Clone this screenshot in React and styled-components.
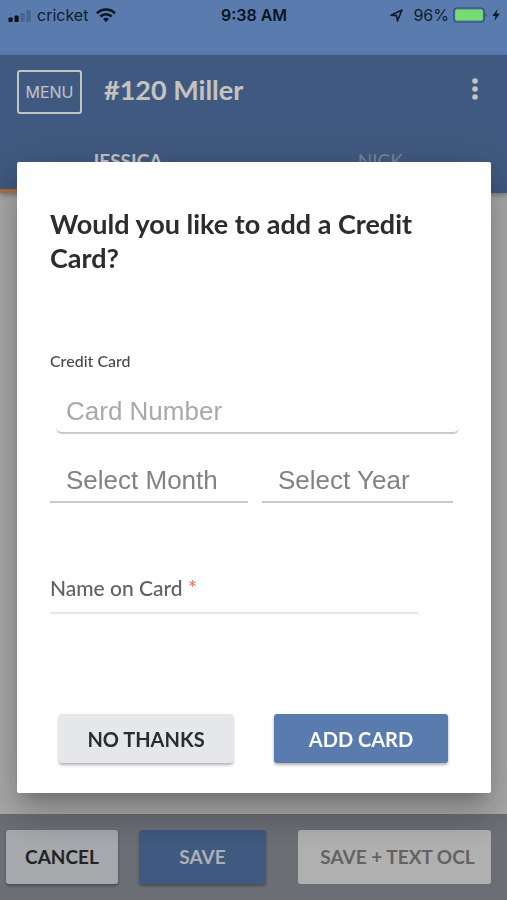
import React, { useState } from 'react';
import styled, { createGlobalStyle, ThemeProvider } from 'styled-components';

const theme = {
  primary: '#597bae',
  primaryDim: '#5170a0',
  text: '#2b2c2e',
  muted: '#606164',
  line: '#c9c9c9',
};

const GlobalStyle = createGlobalStyle`
  * {
    box-sizing: border-box;
  }

  body {
    margin: 0;
    font-family: Lato, "Open Sans", sans-serif;
    color: ${theme.text};
  }

  button, input, select {
    font-family: inherit;
    margin: 0;
  }
`;

const Page = styled.div`
  display: flex;
  flex-direction: column;
  min-height: 100vh;
  background-color: #d4d4d4;
`;

const StatusBar = styled.div`
  display: grid;
  grid-template-columns: 1fr auto 1fr;
  align-items: start;
  height: 55px;
  padding: 5px 7px 0 8px;
  background-color: ${({ theme }) => theme.primary};
  color: #101c2c;
  font-family: Inter, sans-serif;
  font-size: 16px;
  line-height: 20px;
`;

const StatusGroup = styled.div`
  display: flex;
  align-items: center;
  justify-content: ${({ $end }) => ($end ? 'flex-end' : 'flex-start')};
  gap: ${({ $end }) => ($end ? '4px' : '6px')};
  height: 20px;
`;

const Clock = styled.div`
  font-weight: 600;
  color: #0b131f;
`;

const Header = styled.header`
  background-color: ${({ theme }) => theme.primaryDim};
  color: #f4f4f0;
  box-shadow: 0 2px 5px rgba(0, 0, 0, 0.3);
`;

const Toolbar = styled.div`
  display: flex;
  align-items: center;
  height: 74px;
  padding: 0 24px 0 17px;
`;

const MenuButton = styled.button`
  width: 65px;
  height: 44px;
  padding: 0;
  border: 2px solid #f4f4f0;
  border-radius: 3px;
  background: transparent;
  color: #eef4fa;
  font-family: Inter, sans-serif;
  font-size: 16px;
  cursor: pointer;
`;

const Heading = styled.h1`
  flex: 1;
  margin: 0 0 4px 22px;
  font-size: 27px;
  line-height: 34px;
  font-weight: 700;
`;

const MoreButton = styled.button`
  display: flex;
  margin-bottom: 6px;
  padding: 0 5px;
  border: 0;
  background: transparent;
  color: #f4f4f0;
  cursor: pointer;
`;

const Tabs = styled.nav`
  display: flex;
  height: 64px;
`;

const Tab = styled.a`
  flex: 1;
  padding-top: 20px;
  border-bottom: 4px solid ${({ $active }) => ($active ? '#d98a55' : 'transparent')};
  color: ${({ $active }) => ($active ? '#f0f2f4' : '#8fa5c3')};
  font-size: 19px;
  line-height: 24px;
  font-weight: ${({ $active }) => ($active ? 700 : 400)};
  text-align: center;
  text-decoration: none;
`;

const Content = styled.main`
  flex: 1;
`;

const Footer = styled.footer`
  display: flex;
  align-items: flex-start;
  padding: 16px 16px 16px 6px;
  background-color: #888a94;
`;

const Button = styled.button`
  height: 54px;
  padding: 0;
  border: 0;
  border-radius: 3px;
  background-color: ${({ $color }) => $color};
  color: ${({ $text }) => $text || '#2b2c2e'};
  font-size: 19px;
  line-height: 24px;
  font-weight: 700;
  cursor: pointer;
  box-shadow: 0 2px 3px rgba(0, 0, 0, 0.3);
`;

const CancelButton = styled(Button)`
  flex: 112 1 0;
`;

const SaveButton = styled(Button)`
  flex: 127 1 0;
  margin-left: 21px;
`;

const SaveTextButton = styled(Button)`
  flex: 187 1 0;
  margin-left: 32px;
  padding-left: 6px;
  white-space: nowrap;
  box-shadow: none;
`;

const Overlay = styled.div`
  position: fixed;
  inset: 55px 0 0;
  display: flex;
  align-items: center;
  justify-content: center;
  padding: 0 16px 0 17px;
  background-color: rgba(0, 0, 0, 0.2);
`;

const Dialog = styled.form`
  width: 100%;
  max-width: 560px;
  padding: 45px 32px 30px 33px;
  border-radius: 2px;
  background-color: #fefefe;
  box-shadow: 0 11px 15px -7px rgba(0, 0, 0, 0.2),
    0 24px 38px 3px rgba(0, 0, 0, 0.14),
    0 9px 46px 8px rgba(0, 0, 0, 0.12);
`;

const DialogTitle = styled.h2`
  margin: 0;
  font-size: 27px;
  line-height: 34px;
  font-weight: 700;
`;

const SmallLabel = styled.label`
  display: block;
  margin-top: 76px;
  font-size: 16px;
  line-height: 20px;
  font-weight: 500;
  color: #48494b;
`;

const CardInput = styled.input`
  display: block;
  width: calc(100% - 6px);
  height: 48px;
  margin: 15px 0 0 6px;
  padding: 4px 10px 0;
  border: 0 solid transparent;
  border-bottom: 2px solid ${({ theme }) => theme.line};
  border-radius: 6px;
  outline: 0;
  background: transparent;
  font-family: "Liberation Sans", Arial, sans-serif;
  font-size: 26px;

  &::placeholder {
    color: #a9a9a9;
    opacity: 1;
  }
`;

const SelectRow = styled.div`
  display: grid;
  grid-template-columns: 198fr 191fr;
  gap: 14px;
  margin: 20px 6px 0 0;
`;

const Select = styled.select`
  appearance: none;
  width: 100%;
  height: 49px;
  padding: 4px 0 0 16px;
  border: 0;
  border-bottom: 2px solid ${({ theme }) => theme.line};
  border-radius: 0;
  outline: 0;
  background: transparent;
  color: #828282;
  font-family: "Liberation Sans", Arial, sans-serif;
  font-size: 26px;
`;

const NameField = styled.div`
  display: grid;
  margin: 71px 41px 0 0;
  border-bottom: 2px solid #e6e6e6;

  label, input {
    grid-area: 1 / 1;
  }
`;

const NameLabel = styled.label`
  font-size: 21px;
  line-height: 28px;
  font-weight: 500;
  color: ${({ theme }) => theme.muted};
`;

const Required = styled.span`
  color: #ea7c66;
`;

const NameInput = styled.input`
  width: 100%;
  height: 38px;
  padding: 0;
  border: 0;
  outline: 0;
  background: transparent;
  font-size: 21px;
`;

const Actions = styled.div`
  display: flex;
  gap: 41px;
  margin: 100px 11px 0 9px;
`;

const ActionButton = styled(Button)`
  flex: 1;
  height: 49px;
  font-size: 20px;
`;

const SignalIcon = () => (
  <svg width="23" height="13" viewBox="0 0 23 13">
    <rect x="0.5" y="8.5" width="4.2" height="4.5" rx="1" fill="#0b131f" />
    <rect x="6.5" y="6.5" width="4.2" height="6.5" rx="1" fill="#0b131f" />
    <rect x="12.5" y="4" width="4.2" height="9" rx="1" fill="#46658f" />
    <rect x="18.5" y="1" width="4.2" height="12" rx="1" fill="#46658f" />
  </svg>
);

const WifiIcon = () => (
  <svg width="22" height="14" viewBox="-2 0 22 14" fill="none" stroke="#0b131f" strokeWidth="2.6">
    <path d="M1 5.3 C6 0.2 14 0.2 19 5.3" />
    <path d="M4.4 8.5 C7.5 5.5 12.5 5.5 15.6 8.5" />
    <path d="M7 10.9 C8.8 9.3 11.2 9.3 13 10.9 L10 14 Z" fill="#0b131f" stroke="none" />
  </svg>
);

const LocationIcon = () => (
  <svg width="19" height="13" viewBox="0 0 19 13" fill="none" stroke="#101c2c" strokeWidth="1.6" strokeLinejoin="round">
    <path d="M1 6.2 L12 1 L7.4 12 L6.6 6.6 Z" />
  </svg>
);

const BatteryIcon = () => (
  <svg width="35" height="16" viewBox="0 0 35 16">
    <rect x="0.8" y="1" width="30.4" height="14" rx="3.5" fill="none" stroke="#344d70" strokeWidth="1.2" />
    <rect x="2.2" y="2.4" width="27.6" height="11.2" rx="1.5" fill="#76dc72" />
    <path d="M32.6 6 Q34.8 8 32.6 10 Z" fill="#344d70" />
  </svg>
);

const BoltIcon = () => (
  <svg width="8" height="12" viewBox="0 0 8 12">
    <path d="M5.6 0 L0.5 7 H3.6 L2.4 12 L7.6 4.8 H4.4 Z" fill="#0b131f" />
  </svg>
);

const DotsIcon = () => (
  <svg width="6" height="24" viewBox="0 0 6 24" fill="currentColor">
    <circle cx="3" cy="4" r="2.8" />
    <circle cx="3" cy="12" r="2.8" />
    <circle cx="3" cy="20" r="2.8" />
  </svg>
);

const CardDialog = () => {
  const [card, setCard] = useState('');
  const [name, setName] = useState('');

  return (
    <Overlay>
      <Dialog role="dialog" aria-labelledby="dialog-title" onSubmit={(e) => e.preventDefault()}>
        <DialogTitle id="dialog-title">Would you like to add a Credit Card?</DialogTitle>
        <SmallLabel htmlFor="card">Credit Card</SmallLabel>
        <CardInput id="card" placeholder="Card Number" value={card} onChange={(e) => setCard(e.target.value)} />
        <SelectRow>
          <Select aria-label="Month" defaultValue="">
            <option value="">Select Month</option>
          </Select>
          <Select aria-label="Year" defaultValue="">
            <option value="">Select Year</option>
          </Select>
        </SelectRow>
        <NameField>
          <NameLabel htmlFor="name">
            Name on Card <Required>*</Required>
          </NameLabel>
          <NameInput id="name" value={name} onChange={(e) => setName(e.target.value)} />
        </NameField>
        <Actions>
          <ActionButton type="button" $color="#e5e7eb">NO THANKS</ActionButton>
          <ActionButton type="submit" $color={theme.primary} $text="#fafcff">ADD CARD</ActionButton>
        </Actions>
      </Dialog>
    </Overlay>
  );
};

const App = () => {
  return (
    <ThemeProvider theme={theme}>
      <GlobalStyle />
      <Page>
        <StatusBar>
          <StatusGroup>
            <SignalIcon />
            <span>cricket</span>
            <WifiIcon />
          </StatusGroup>
          <Clock>9:38 AM</Clock>
          <StatusGroup $end>
            <LocationIcon />
            <span>96%</span>
            <BatteryIcon />
            <BoltIcon />
          </StatusGroup>
        </StatusBar>
        <Header>
          <Toolbar>
            <MenuButton type="button">MENU</MenuButton>
            <Heading>#120 Miller</Heading>
            <MoreButton type="button" aria-label="More">
              <DotsIcon />
            </MoreButton>
          </Toolbar>
          <Tabs>
            <Tab href="#jessica" $active>JESSICA</Tab>
            <Tab href="#nick">NICK</Tab>
          </Tabs>
        </Header>
        <Content />
        <Footer>
          <CancelButton type="button" $color="#d0d3d8">CANCEL</CancelButton>
          <SaveButton type="button" $color={theme.primaryDim} $text="#d8dce2">SAVE</SaveButton>
          <SaveTextButton type="button" $color="#dcdcdc" $text="#7c7c7c">SAVE + TEXT OCL</SaveTextButton>
        </Footer>
      </Page>
      <CardDialog />
    </ThemeProvider>
  );
};

export default App;
